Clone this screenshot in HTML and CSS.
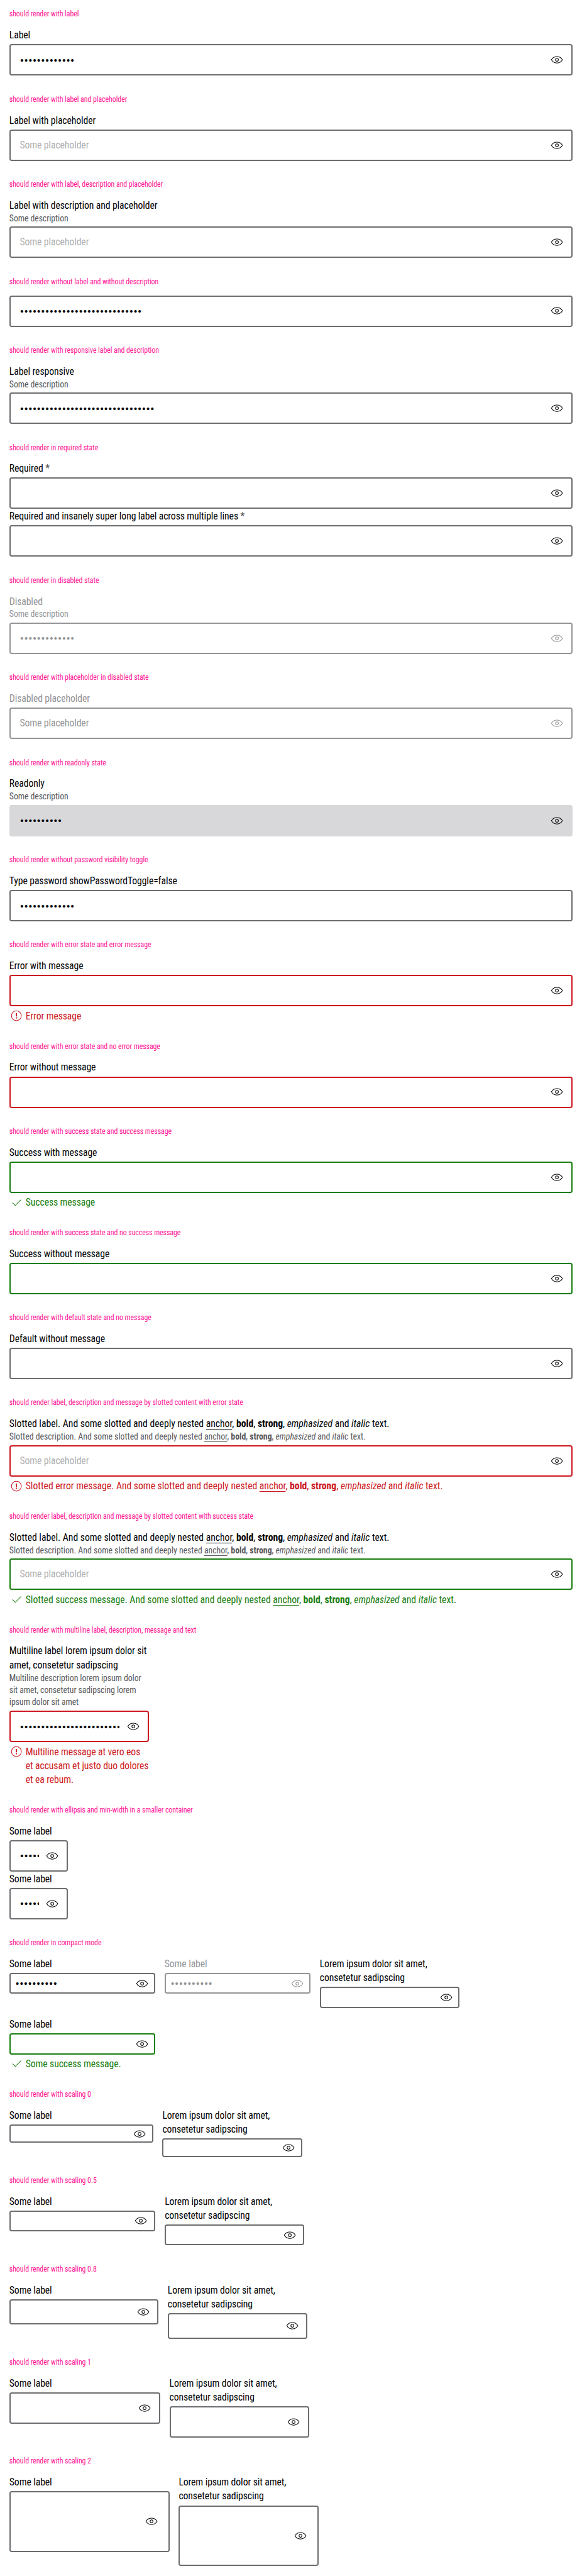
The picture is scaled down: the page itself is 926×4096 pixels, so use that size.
FILE: index.html
```
<!DOCTYPE html>
<html lang="en">
<head>
<meta charset="utf-8">
<title>Text field password</title>
<link rel="stylesheet" href="styles.css">
</head>
<body>
<svg class="sprite" aria-hidden="true">
  <symbol id="eye" viewBox="0 0 24 24"><path d="M2.500 12C4.600 8.300 8 6.500 12 6.500s7.400 1.800 9.500 5.500c-2.100 3.700-5.500 5.500-9.500 5.500S4.600 15.700 2.500 12z"/><circle cx="12" cy="12" r="2.500"/></symbol>
  <symbol id="error" viewBox="0 0 24 24"><circle cx="12" cy="12" r="8.500"/><path d="M12 7.500v5.600M12 14.700v2" stroke-width="2"/></symbol>
  <symbol id="check" viewBox="0 0 24 24"><path d="M5.300 12.300l4.700 4.700 9.900-9.900"/></symbol>
</svg>
<main class="page">

<section class="case"><h2>should render with label</h2>
  <div class="field"><label>Label</label><div class="box"><span class="value dots">•••••••••••••</span><svg class="icon"><use href="#eye"/></svg></div></div>
</section>

<section class="case"><h2>should render with label and placeholder</h2>
  <div class="field"><label>Label with placeholder</label><div class="box"><span class="value hint">Some placeholder</span><svg class="icon"><use href="#eye"/></svg></div></div>
</section>

<section class="case"><h2>should render with label, description and placeholder</h2>
  <div class="field"><label>Label with description and placeholder</label><p class="desc">Some description</p><div class="box"><span class="value hint">Some placeholder</span><svg class="icon"><use href="#eye"/></svg></div></div>
</section>

<section class="case"><h2>should render without label and without description</h2>
  <div class="field"><div class="box bare"><span class="value dots">•••••••••••••••••••••••••••••</span><svg class="icon"><use href="#eye"/></svg></div></div>
</section>

<section class="case"><h2>should render with responsive label and description</h2>
  <div class="field"><label>Label responsive</label><p class="desc">Some description</p><div class="box"><span class="value dots">••••••••••••••••••••••••••••••••</span><svg class="icon"><use href="#eye"/></svg></div></div>
</section>

<section class="case"><h2>should render in required state</h2>
  <div class="field"><label>Required <span class="star">*</span></label><div class="box"><span class="value"></span><svg class="icon"><use href="#eye"/></svg></div></div>
  <div class="field"><label>Required and insanely super long label across multiple lines <span class="star">*</span></label><div class="box"><span class="value"></span><svg class="icon"><use href="#eye"/></svg></div></div>
</section>

<section class="case"><h2>should render in disabled state</h2>
  <div class="field disabled"><label>Disabled</label><p class="desc">Some description</p><div class="box"><span class="value dots">•••••••••••••</span><svg class="icon"><use href="#eye"/></svg></div></div>
</section>

<section class="case"><h2>should render with placeholder in disabled state</h2>
  <div class="field disabled"><label>Disabled placeholder</label><div class="box"><span class="value">Some placeholder</span><svg class="icon"><use href="#eye"/></svg></div></div>
</section>

<section class="case"><h2>should render with readonly state</h2>
  <div class="field readonly"><label>Readonly</label><p class="desc">Some description</p><div class="box"><span class="value dots">••••••••••</span><svg class="icon"><use href="#eye"/></svg></div></div>
</section>

<section class="case"><h2>should render without password visibility toggle</h2>
  <div class="field"><label>Type password showPasswordToggle=false</label><div class="box"><span class="value dots">•••••••••••••</span></div></div>
</section>

<section class="case"><h2>should render with error state and error message</h2>
  <div class="field error"><label>Error with message</label><div class="box"><span class="value"></span><svg class="icon"><use href="#eye"/></svg></div><p class="message"><svg class="icon"><use href="#error"/></svg><span>Error message</span></p></div>
</section>

<section class="case"><h2>should render with error state and no error message</h2>
  <div class="field error"><label>Error without message</label><div class="box"><span class="value"></span><svg class="icon"><use href="#eye"/></svg></div></div>
</section>

<section class="case"><h2>should render with success state and success message</h2>
  <div class="field success"><label>Success with message</label><div class="box"><span class="value"></span><svg class="icon"><use href="#eye"/></svg></div><p class="message"><svg class="icon"><use href="#check"/></svg><span>Success message</span></p></div>
</section>

<section class="case"><h2>should render with success state and no success message</h2>
  <div class="field success"><label>Success without message</label><div class="box"><span class="value"></span><svg class="icon"><use href="#eye"/></svg></div></div>
</section>

<section class="case"><h2>should render with default state and no message</h2>
  <div class="field"><label>Default without message</label><div class="box"><span class="value"></span><svg class="icon"><use href="#eye"/></svg></div></div>
</section>

<section class="case slotted"><h2>should render label, description and message by slotted content with error state</h2>
  <div class="field error"><label>Slotted label. And some slotted and deeply nested <u>anchor</u>, <b>bold</b>, <strong>strong</strong>, <em>emphasized</em> and <i>italic</i> text.</label><p class="desc">Slotted description. And some slotted and deeply nested <u>anchor</u>, <b>bold</b>, <strong>strong</strong>, <em>emphasized</em> and <i>italic</i> text.</p><div class="box"><span class="value hint">Some placeholder</span><svg class="icon"><use href="#eye"/></svg></div><p class="message"><svg class="icon"><use href="#error"/></svg><span>Slotted error message. And some slotted and deeply nested <u>anchor</u>, <b>bold</b>, <strong>strong</strong>, <em>emphasized</em> and <i>italic</i> text.</span></p></div>
</section>

<section class="case slotted"><h2>should render label, description and message by slotted content with success state</h2>
  <div class="field success"><label>Slotted label. And some slotted and deeply nested <u>anchor</u>, <b>bold</b>, <strong>strong</strong>, <em>emphasized</em> and <i>italic</i> text.</label><p class="desc">Slotted description. And some slotted and deeply nested <u>anchor</u>, <b>bold</b>, <strong>strong</strong>, <em>emphasized</em> and <i>italic</i> text.</p><div class="box"><span class="value hint">Some placeholder</span><svg class="icon"><use href="#eye"/></svg></div><p class="message"><svg class="icon"><use href="#check"/></svg><span>Slotted success message. And some slotted and deeply nested <u>anchor</u>, <b>bold</b>, <strong>strong</strong>, <em>emphasized</em> and <i>italic</i> text.</span></p></div>
</section>

<section class="case"><h2>should render with multiline label, description, message and text</h2>
  <div class="field error w240"><label>Multiline label lorem ipsum dolor sit<br>amet, consetetur sadipscing</label><p class="desc">Multiline description lorem ipsum dolor<br>sit amet, consetetur sadipscing lorem<br>ipsum dolor sit amet</p><div class="box"><span class="value dots">••••••••••••••••••••••••</span><svg class="icon"><use href="#eye"/></svg></div><p class="message"><svg class="icon"><use href="#error"/></svg><span>Multiline message at vero eos<br>et accusam et justo duo dolores<br>et ea rebum.</span></p></div>
</section>

<section class="case"><h2>should render with ellipsis and min-width in a smaller container</h2>
  <div class="field w101"><label>Some label</label><div class="box"><span class="value dots">•••••</span><svg class="icon"><use href="#eye"/></svg></div></div>
  <div class="field w101"><label>Some label</label><div class="box"><span class="value dots">•••••</span><svg class="icon"><use href="#eye"/></svg></div></div>
</section>

<section class="case"><h2>should render in compact mode</h2>
  <div class="row compact">
    <div class="field"><label>Some label</label><div class="box"><span class="value dots">••••••••••</span><svg class="icon"><use href="#eye"/></svg></div></div>
    <div class="field disabled"><label>Some label</label><div class="box"><span class="value dots">••••••••••</span><svg class="icon"><use href="#eye"/></svg></div></div>
    <div class="field w240"><label>Lorem ipsum dolor sit amet,<br>consetetur sadipscing</label><div class="box"><span class="value"></span><svg class="icon"><use href="#eye"/></svg></div></div>
  </div>
  <div class="row compact second">
    <div class="field success"><label>Some label</label><div class="box"><span class="value"></span><svg class="icon"><use href="#eye"/></svg></div><p class="message"><svg class="icon"><use href="#check"/></svg><span>Some success message.</span></p></div>
  </div>
</section>

<section class="case"><h2>should render with scaling 0</h2>
  <div class="row scale-0">
    <div class="field"><label>Some label</label><div class="box"><span class="value"></span><svg class="icon"><use href="#eye"/></svg></div></div>
    <div class="field w240"><label>Lorem ipsum dolor sit amet,<br>consetetur sadipscing</label><div class="box"><span class="value"></span><svg class="icon"><use href="#eye"/></svg></div></div>
  </div>
</section>

<section class="case"><h2>should render with scaling 0.5</h2>
  <div class="row scale-05">
    <div class="field"><label>Some label</label><div class="box"><span class="value"></span><svg class="icon"><use href="#eye"/></svg></div></div>
    <div class="field w240"><label>Lorem ipsum dolor sit amet,<br>consetetur sadipscing</label><div class="box"><span class="value"></span><svg class="icon"><use href="#eye"/></svg></div></div>
  </div>
</section>

<section class="case"><h2>should render with scaling 0.8</h2>
  <div class="row scale-08">
    <div class="field"><label>Some label</label><div class="box"><span class="value"></span><svg class="icon"><use href="#eye"/></svg></div></div>
    <div class="field w240"><label>Lorem ipsum dolor sit amet,<br>consetetur sadipscing</label><div class="box"><span class="value"></span><svg class="icon"><use href="#eye"/></svg></div></div>
  </div>
</section>

<section class="case"><h2>should render with scaling 1</h2>
  <div class="row scale-1">
    <div class="field"><label>Some label</label><div class="box"><span class="value"></span><svg class="icon"><use href="#eye"/></svg></div></div>
    <div class="field w240"><label>Lorem ipsum dolor sit amet,<br>consetetur sadipscing</label><div class="box"><span class="value"></span><svg class="icon"><use href="#eye"/></svg></div></div>
  </div>
</section>

<section class="case"><h2>should render with scaling 2</h2>
  <div class="row scale-2">
    <div class="field"><label>Some label</label><div class="box"><span class="value"></span><svg class="icon"><use href="#eye"/></svg></div></div>
    <div class="field w240"><label>Lorem ipsum dolor sit amet,<br>consetetur sadipscing</label><div class="box"><span class="value"></span><svg class="icon"><use href="#eye"/></svg></div></div>
  </div>
</section>

</main>
</body>
</html>
```
FILE: styles.css
```
* { box-sizing: border-box; }
html, body { margin: 0; background: #fff; }
h2, p { margin: 0; }

.sprite { position: absolute; width: 0; height: 0; }

.page {
  zoom: 0.9264;
  width: 999.500px;
  color: #010205;
  font-family: Roboto, "Liberation Sans", sans-serif;
  font-size: 17px;
  font-stretch: 75%;
  font-weight: 400;
  letter-spacing: -0.110px;
  line-height: 24px;
  white-space: nowrap;
}

.case { padding: 16px; }
.case h2 {
  margin-bottom: 15.300px;
  padding-top: 0.700px;
  color: #ff1493;
  font-size: 12.900px;
  font-weight: 400;
  letter-spacing: -0.080px;
  line-height: 16px;
}

.field {
  --tone: #6b6d70;
  --pad: 15px;
  --start: 16px;
  --height: 54px;
}
.field label {
  display: block;
  margin-bottom: -0.900px;
  padding-top: 0.900px;
}
.desc {
  margin-bottom: -0.500px;
  padding-top: 0.500px;
  color: #58595c;
  font-size: 14.900px;
  letter-spacing: -0.090px;
  line-height: 21px;
}
.star { color: #535457; }

.slotted label, .slotted .message { letter-spacing: -0.035px; }
.slotted .desc { letter-spacing: -0.010px; }
.slotted h2 { letter-spacing: -0.040px; }

.box {
  display: flex;
  align-items: center;
  height: var(--height);
  margin-top: 4px;
  padding: 0 calc(var(--pad) - 2.200px) 0 calc(var(--start) - 0.200px);
  border: 2.200px solid var(--tone);
  border-radius: 4px;
}
.box.bare { margin-top: 0; }
.value {
  flex: 1;
  min-width: 0;
  overflow: hidden;
}
.box .icon { margin-left: 12px; }
.hint { color: #aeafb2; }
.dots {
  padding: 1px 0 0 1px;
  font-family: "Liberation Sans", sans-serif;
  font-size: 16px;
  letter-spacing: 1.620px;
}

.icon {
  flex: none;
  width: 24px;
  height: 24px;
  fill: none;
  stroke: currentColor;
  stroke-width: 1.100;
}

.message {
  display: flex;
  gap: 4px;
  margin-top: 4px;
  color: var(--tone);
}
.message span {
  margin-bottom: -0.900px;
  padding-top: 0.900px;
}

b, strong { font-weight: 700; }
u { text-underline-offset: 3px; }

.error { --tone: #cc1922; }
.success { --tone: #197e10; }
.disabled { --tone: #949598; color: #949598; }
.disabled .desc { color: #949598; }
.readonly .box { border-color: #d8d8db; background: #d8d8db; }

.w101 { width: 101px; }
.w101 .box .icon { margin-left: 10.800px; }

.row { display: flex; gap: 16px; align-items: flex-start; }
.row.second { margin-top: 16px; }

.row .field { width: var(--w); }
.w240, .row .field.w240 { width: 240px; }
.compact { --w: 250.600px; }
.compact .field { --height: 36px; --pad: 11px; --start: 8px; }
.scale-0 { --w: 247px; }
.scale-0 .field { --height: 32px; --pad: 11px; }
.scale-05 { --w: 251px; }
.scale-05 .field { --height: 36px; --pad: 13px; }
.scale-08 { --w: 256px; }
.scale-08 .field { --height: 44px; --pad: 14px; }
.scale-1 { --w: 259px; }
.scale-2 { --w: 275px; }
.scale-2 .field { --height: 104px; --pad: 19px; }
```
